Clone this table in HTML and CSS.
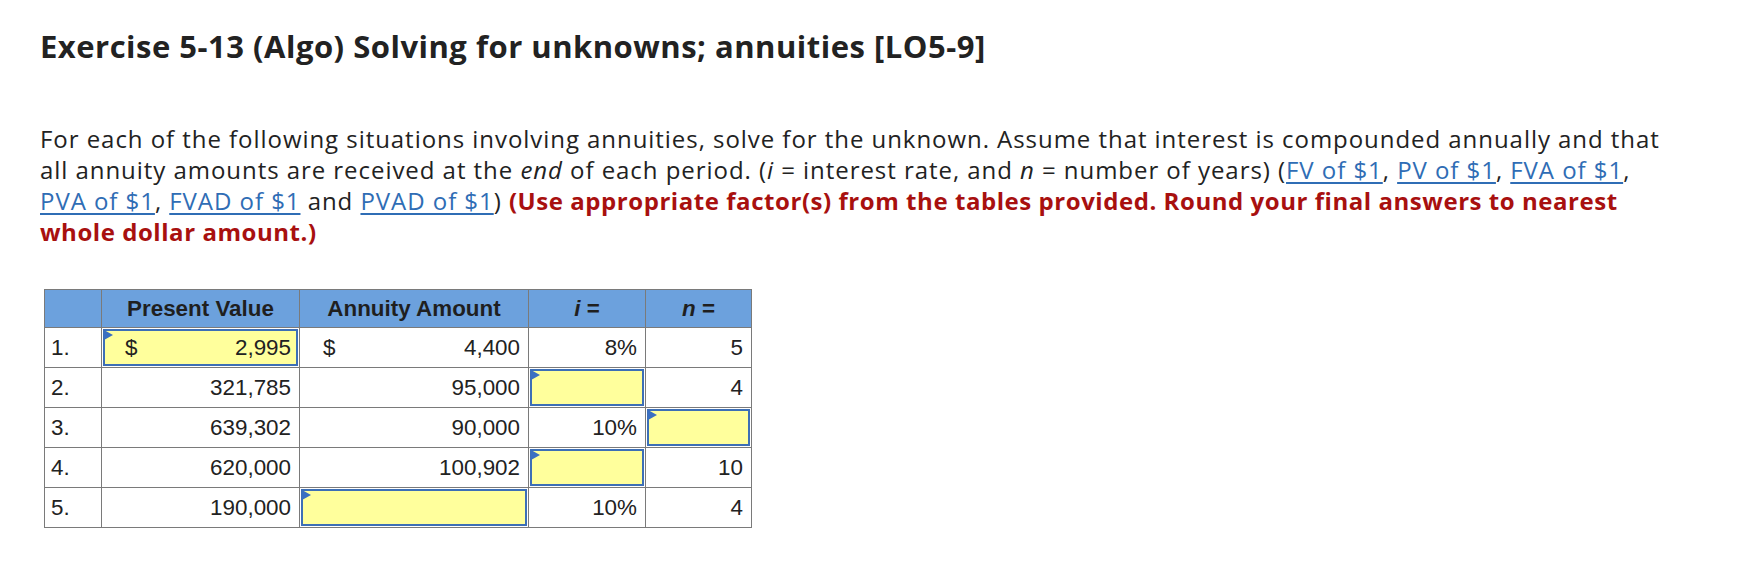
FILE: index.html
```html
<!DOCTYPE html>
<html lang="en">
<head>
<meta charset="utf-8">
<title>Exercise 5-13</title>
<link rel="stylesheet" href="styles.css">
</head>
<body>
<main class="page">
  <h1 class="title">Exercise 5-13 (Algo) Solving for unknowns; annuities [LO5-9]</h1>
  <p class="prompt">For each of the following situations involving annuities, solve for the unknown. Assume that interest is compounded annually and that all annuity amounts are received at the <em>end</em> of each period. (<em>i</em> = interest rate, and <em>n</em> = number of years) (<a href="#">FV of $1</a>, <a href="#">PV of $1</a>, <a href="#">FVA of $1</a>, <a href="#">PVA of $1</a>, <a href="#">FVAD of $1</a> and <a href="#">PVAD of $1</a>) <strong class="note">(Use appropriate factor(s) from the tables provided. Round your final answers to nearest whole dollar amount.)</strong></p>

  <table class="grid">
    <colgroup>
      <col class="c-num"><col class="c-pv"><col class="c-aa"><col class="c-i"><col class="c-n">
    </colgroup>
    <thead>
      <tr>
        <th></th>
        <th>Present Value</th>
        <th>Annuity Amount</th>
        <th><em>i</em> =</th>
        <th><em>n</em> =</th>
      </tr>
    </thead>
    <tbody>
      <tr>
        <td class="num">1.</td>
        <td class="entry"><div class="input money"><span>$</span><span>2,995</span></div></td>
        <td><div class="money plain"><span>$</span><span>4,400</span></div></td>
        <td class="val">8%</td>
        <td class="val">5</td>
      </tr>
      <tr>
        <td class="num">2.</td>
        <td class="val">321,785</td>
        <td class="val">95,000</td>
        <td class="entry"><div class="input"></div></td>
        <td class="val">4</td>
      </tr>
      <tr>
        <td class="num">3.</td>
        <td class="val">639,302</td>
        <td class="val">90,000</td>
        <td class="val">10%</td>
        <td class="entry"><div class="input"></div></td>
      </tr>
      <tr>
        <td class="num">4.</td>
        <td class="val">620,000</td>
        <td class="val">100,902</td>
        <td class="entry"><div class="input"></div></td>
        <td class="val">10</td>
      </tr>
      <tr>
        <td class="num">5.</td>
        <td class="val">190,000</td>
        <td class="entry"><div class="input"></div></td>
        <td class="val">10%</td>
        <td class="val">4</td>
      </tr>
    </tbody>
  </table>
</main>
</body>
</html>
```

FILE: styles.css
```css
* { box-sizing: border-box; }

body {
  margin: 0;
  background: #ffffff;
  color: #222222;
  font-family: "Open Sans", Lato, sans-serif;
}

.page {
  padding: 26px 40px;
}

.title {
  margin: 0;
  font-size: 31px;
  line-height: 40px;
  font-weight: 700;
  color: #222222;
  letter-spacing: 0.5px;
}

.prompt {
  margin: 57px 0 0;
  width: 1642px;
  font-size: 24px;
  line-height: 31px;
  letter-spacing: 0.95px;
}

.prompt a {
  color: #2f6db5;
  text-decoration: underline;
  text-underline-offset: 3px;
}

.note {
  color: #a8100f;
  font-weight: 700;
  letter-spacing: 0.55px;
}

.grid {
  margin: 42px 0 0 4px;
  border-collapse: collapse;
  table-layout: fixed;
  width: 707px;
  font-family: "Liberation Sans", Arial, sans-serif;
  font-size: 22.4px;
  letter-spacing: 0;
  color: #222222;
}

.c-num { width: 57px; }
.c-pv { width: 198px; }
.c-aa { width: 229px; }
.c-i { width: 117px; }
.c-n { width: 106px; }

.grid th,
.grid td {
  border: 1px solid #7a7a7a;
  padding: 0;
}

.grid th {
  height: 38px;
  background: #6ca1dd;
  font-weight: 700;
  text-align: center;
  color: #1f1f1f;
}

.grid td {
  height: 40px;
}

.grid td.num {
  padding-left: 6px;
}

.grid td.val {
  text-align: right;
  padding-right: 8px;
}

.grid td.entry {
  padding: 1px;
}

.input {
  position: relative;
  height: 37px;
  background: #ffff9c;
  border: 2px solid #3d6fb6;
}

.input::before {
  content: "";
  position: absolute;
  left: -1px;
  top: -1px;
  width: 0;
  height: 0;
  border-top: 5.5px solid transparent;
  border-bottom: 5.5px solid transparent;
  border-left: 9px solid #3a6fc2;
}

.money {
  display: flex;
  justify-content: space-between;
  align-items: center;
  padding: 0 5px 0 20px;
}

.money.plain {
  padding: 0 8px 0 23px;
}
```
